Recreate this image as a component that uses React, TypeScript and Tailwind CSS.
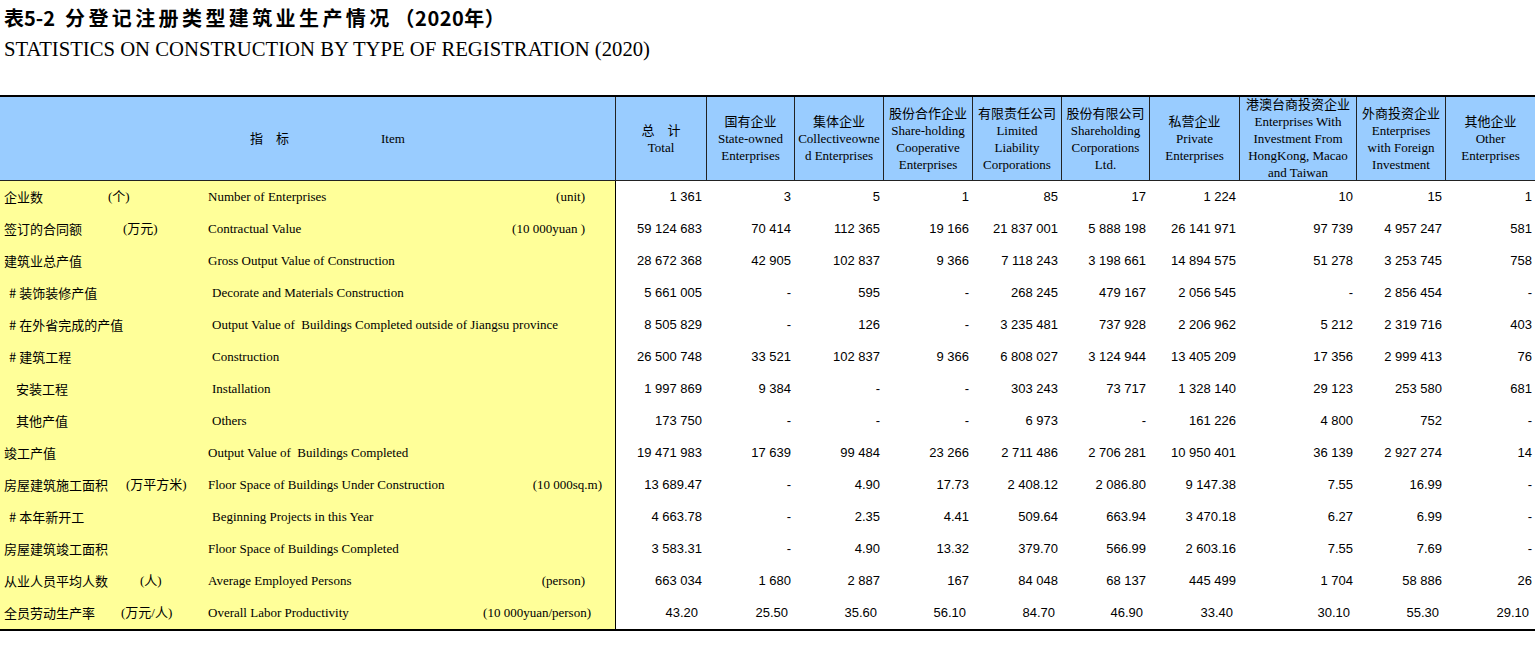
import React from 'react'

type Row = {
    cn: string
    cnPad: string
    unit?: string
    unitPad?: string
    en: string
    enPad: string
    enUnit?: string
    enUnitPad?: string
    values: string[]
}

const headers = [
    ['总　计', 'Total'],
    ['国有企业', 'State-owned', 'Enterprises'],
    ['集体企业', 'Collectiveowne', 'd Enterprises'],
    ['股份合作企业', 'Share-holding', 'Cooperative', 'Enterprises'],
    ['有限责任公司', 'Limited', 'Liability', 'Corporations'],
    ['股份有限公司', 'Shareholding', 'Corporations', 'Ltd.'],
    ['私营企业', 'Private', 'Enterprises'],
    ['港澳台商投资企业', 'Enterprises With', 'Investment From', 'HongKong, Macao', 'and Taiwan'],
    ['外商投资企业', 'Enterprises', 'with Foreign', 'Investment'],
    ['其他企业', 'Other', 'Enterprises'],
]

const rows: Row[] = [
    {
        cn: '企业数', cnPad: 'pl-1', unit: '(个)', unitPad: 'pl-0',
        en: 'Number of Enterprises', enPad: 'pl-0', enUnit: '(unit)', enUnitPad: 'pr-[30px]',
        values: ['1 361', '3', '5', '1', '85', '17', '1 224', '10', '15', '1'],
    },
    {
        cn: '签订的合同额', cnPad: 'pl-1', unit: '(万元)', unitPad: 'pl-[15px]',
        en: 'Contractual Value', enPad: 'pl-0', enUnit: '(10 000yuan )', enUnitPad: 'pr-[30px]',
        values: ['59 124 683', '70 414', '112 365', '19 166', '21 837 001', '5 888 198', '26 141 971', '97 739', '4 957 247', '581'],
    },
    {
        cn: '建筑业总产值', cnPad: 'pl-1',
        en: 'Gross Output Value of Construction', enPad: 'pl-0',
        values: ['28 672 368', '42 905', '102 837', '9 366', '7 118 243', '3 198 661', '14 894 575', '51 278', '3 253 745', '758'],
    },
    {
        cn: '# 装饰装修产值', cnPad: 'pl-[9px]',
        en: 'Decorate and Materials Construction', enPad: 'pl-[4px]',
        values: ['5 661 005', '-', '595', '-', '268 245', '479 167', '2 056 545', '-', '2 856 454', '-'],
    },
    {
        cn: '# 在外省完成的产值', cnPad: 'pl-[9px]',
        en: 'Output Value of\u00a0 Buildings Completed outside of Jiangsu province', enPad: 'pl-[4px]',
        values: ['8 505 829', '-', '126', '-', '3 235 481', '737 928', '2 206 962', '5 212', '2 319 716', '403'],
    },
    {
        cn: '# 建筑工程', cnPad: 'pl-[9px]',
        en: 'Construction', enPad: 'pl-[4px]',
        values: ['26 500 748', '33 521', '102 837', '9 366', '6 808 027', '3 124 944', '13 405 209', '17 356', '2 999 413', '76'],
    },
    {
        cn: '安装工程', cnPad: 'pl-[16px]',
        en: 'Installation', enPad: 'pl-[4px]',
        values: ['1 997 869', '9 384', '-', '-', '303 243', '73 717', '1 328 140', '29 123', '253 580', '681'],
    },
    {
        cn: '其他产值', cnPad: 'pl-[16px]',
        en: 'Others', enPad: 'pl-[4px]',
        values: ['173 750', '-', '-', '-', '6 973', '-', '161 226', '4 800', '752', '-'],
    },
    {
        cn: '竣工产值', cnPad: 'pl-1',
        en: 'Output Value of\u00a0 Buildings Completed', enPad: 'pl-0',
        values: ['19 471 983', '17 639', '99 484', '23 266', '2 711 486', '2 706 281', '10 950 401', '36 139', '2 927 274', '14'],
    },
    {
        cn: '房屋建筑施工面积', cnPad: 'pl-1', unit: '(万平方米)', unitPad: 'pl-[18px]',
        en: 'Floor Space of Buildings Under Construction', enPad: 'pl-0', enUnit: '(10 000sq.m)', enUnitPad: 'pr-[13px]',
        values: ['13 689.47', '-', '4.90', '17.73', '2 408.12', '2 086.80', '9 147.38', '7.55', '16.99', '-'],
    },
    {
        cn: '# 本年新开工', cnPad: 'pl-[9px]',
        en: 'Beginning Projects in this Year', enPad: 'pl-[4px]',
        values: ['4 663.78', '-', '2.35', '4.41', '509.64', '663.94', '3 470.18', '6.27', '6.99', '-'],
    },
    {
        cn: '房屋建筑竣工面积', cnPad: 'pl-1',
        en: 'Floor Space of Buildings Completed', enPad: 'pl-0',
        values: ['3 583.31', '-', '4.90', '13.32', '379.70', '566.99', '2 603.16', '7.55', '7.69', '-'],
    },
    {
        cn: '从业人员平均人数', cnPad: 'pl-1', unit: '(人)', unitPad: 'pl-[32px]',
        en: 'Average Employed Persons', enPad: 'pl-0', enUnit: '(person)', enUnitPad: 'pr-[30px]',
        values: ['663 034', '1 680', '2 887', '167', '84 048', '68 137', '445 499', '1 704', '58 886', '26'],
    },
    {
        cn: '全员劳动生产率', cnPad: 'pl-1', unit: '(万元/人)', unitPad: 'pl-[13px]',
        en: 'Overall Labor Productivity', enPad: 'pl-0', enUnit: '(10 000yuan/person)', enUnitPad: 'pr-[24px]',
        values: ['43.20', '25.50', '35.60', '56.10', '84.70', '46.90', '33.40', '30.10', '55.30', '29.10'],
    },
]

const serif = "font-['Liberation_Serif','Noto_Sans_CJK_SC',serif]"
const cjk = "font-['Noto_Sans_CJK_SC',sans-serif]"

export default function App() {
    return (
        <div className="min-h-[662px] w-[1535px] bg-white text-black">
            <div className="pl-1 pt-[4px]">
                <h1 className="flex h-[28px] items-center font-['Noto_Sans_CJK_SC',sans-serif] text-[20px] leading-[28px] font-bold">
                    <span>表5-2</span>
                    <span className="ml-[10px] tracking-[3.4px]">分登记注册类型建筑业生产情况</span>
                    <span className="ml-[2px] tracking-[0.5px]">（2020年）</span>
                </h1>
                <h2 className="mt-[4px] h-[26px] font-['Liberation_Serif',serif] text-[20.7px] leading-[26px]">
                    STATISTICS ON CONSTRUCTION BY TYPE OF REGISTRATION (2020)
                </h2>
            </div>

            <div className="mt-[33px] grid grid-cols-[615px_91px_88px_89px_89px_89px_88px_90px_117px_89px_90px] border-t-2 border-b-2 border-black">
                {/* header */}
                <div className={`flex h-[84px] items-center border-b border-[#222] bg-[#99ccff] text-[13px] ${serif}`}>
                    <span className="ml-[250px]">指　标</span>
                    <span className="ml-[92px]">Item</span>
                </div>
                {headers.map((lines, i) => (
                    <div
                        key={i}
                        className={`flex h-[84px] flex-col items-center justify-center overflow-visible border-b border-l border-[#222] bg-[#99ccff] text-center text-[13px] leading-[17px] whitespace-nowrap ${serif}`}
                    >
                        {lines.map((line, j) => (
                            <span key={j}>{line}</span>
                        ))}
                    </div>
                ))}

                {/* body */}
                {rows.map((row, r) => {
                    const isLast = r === rows.length - 1
                    return (
                        <React.Fragment key={r}>
                            <div className="grid h-8 grid-cols-[108px_100px_1fr] items-center bg-[#ffff99] text-[13px] whitespace-nowrap">
                                <span className={`${cjk} ${row.cnPad}`}>{row.cn}</span>
                                <span className={`${serif} ${row.unitPad ?? ''}`}>{row.unit}</span>
                                <div className={`flex items-center justify-between font-['Liberation_Serif',serif] ${row.enPad}`}>
                                    <span>{row.en}</span>
                                    {row.enUnit && <span className={row.enUnitPad}>{row.enUnit}</span>}
                                </div>
                            </div>
                            {row.values.map((v, c) => (
                                <div
                                    key={c}
                                    className={`flex h-8 items-center justify-end font-['Liberation_Sans',Arial,sans-serif] text-[13px] whitespace-nowrap ${
                                        c === 0 ? 'border-l border-black' : ''
                                    } ${
                                        isLast
                                            ? c === 0
                                                ? 'pr-[8px]'
                                                : 'pr-[6px]'
                                            : c === 0
                                              ? 'pr-[4px]'
                                              : 'pr-[3px]'
                                    }`}
                                >
                                    {v}
                                </div>
                            ))}
                        </React.Fragment>
                    )
                })}
            </div>
        </div>
    )
}
